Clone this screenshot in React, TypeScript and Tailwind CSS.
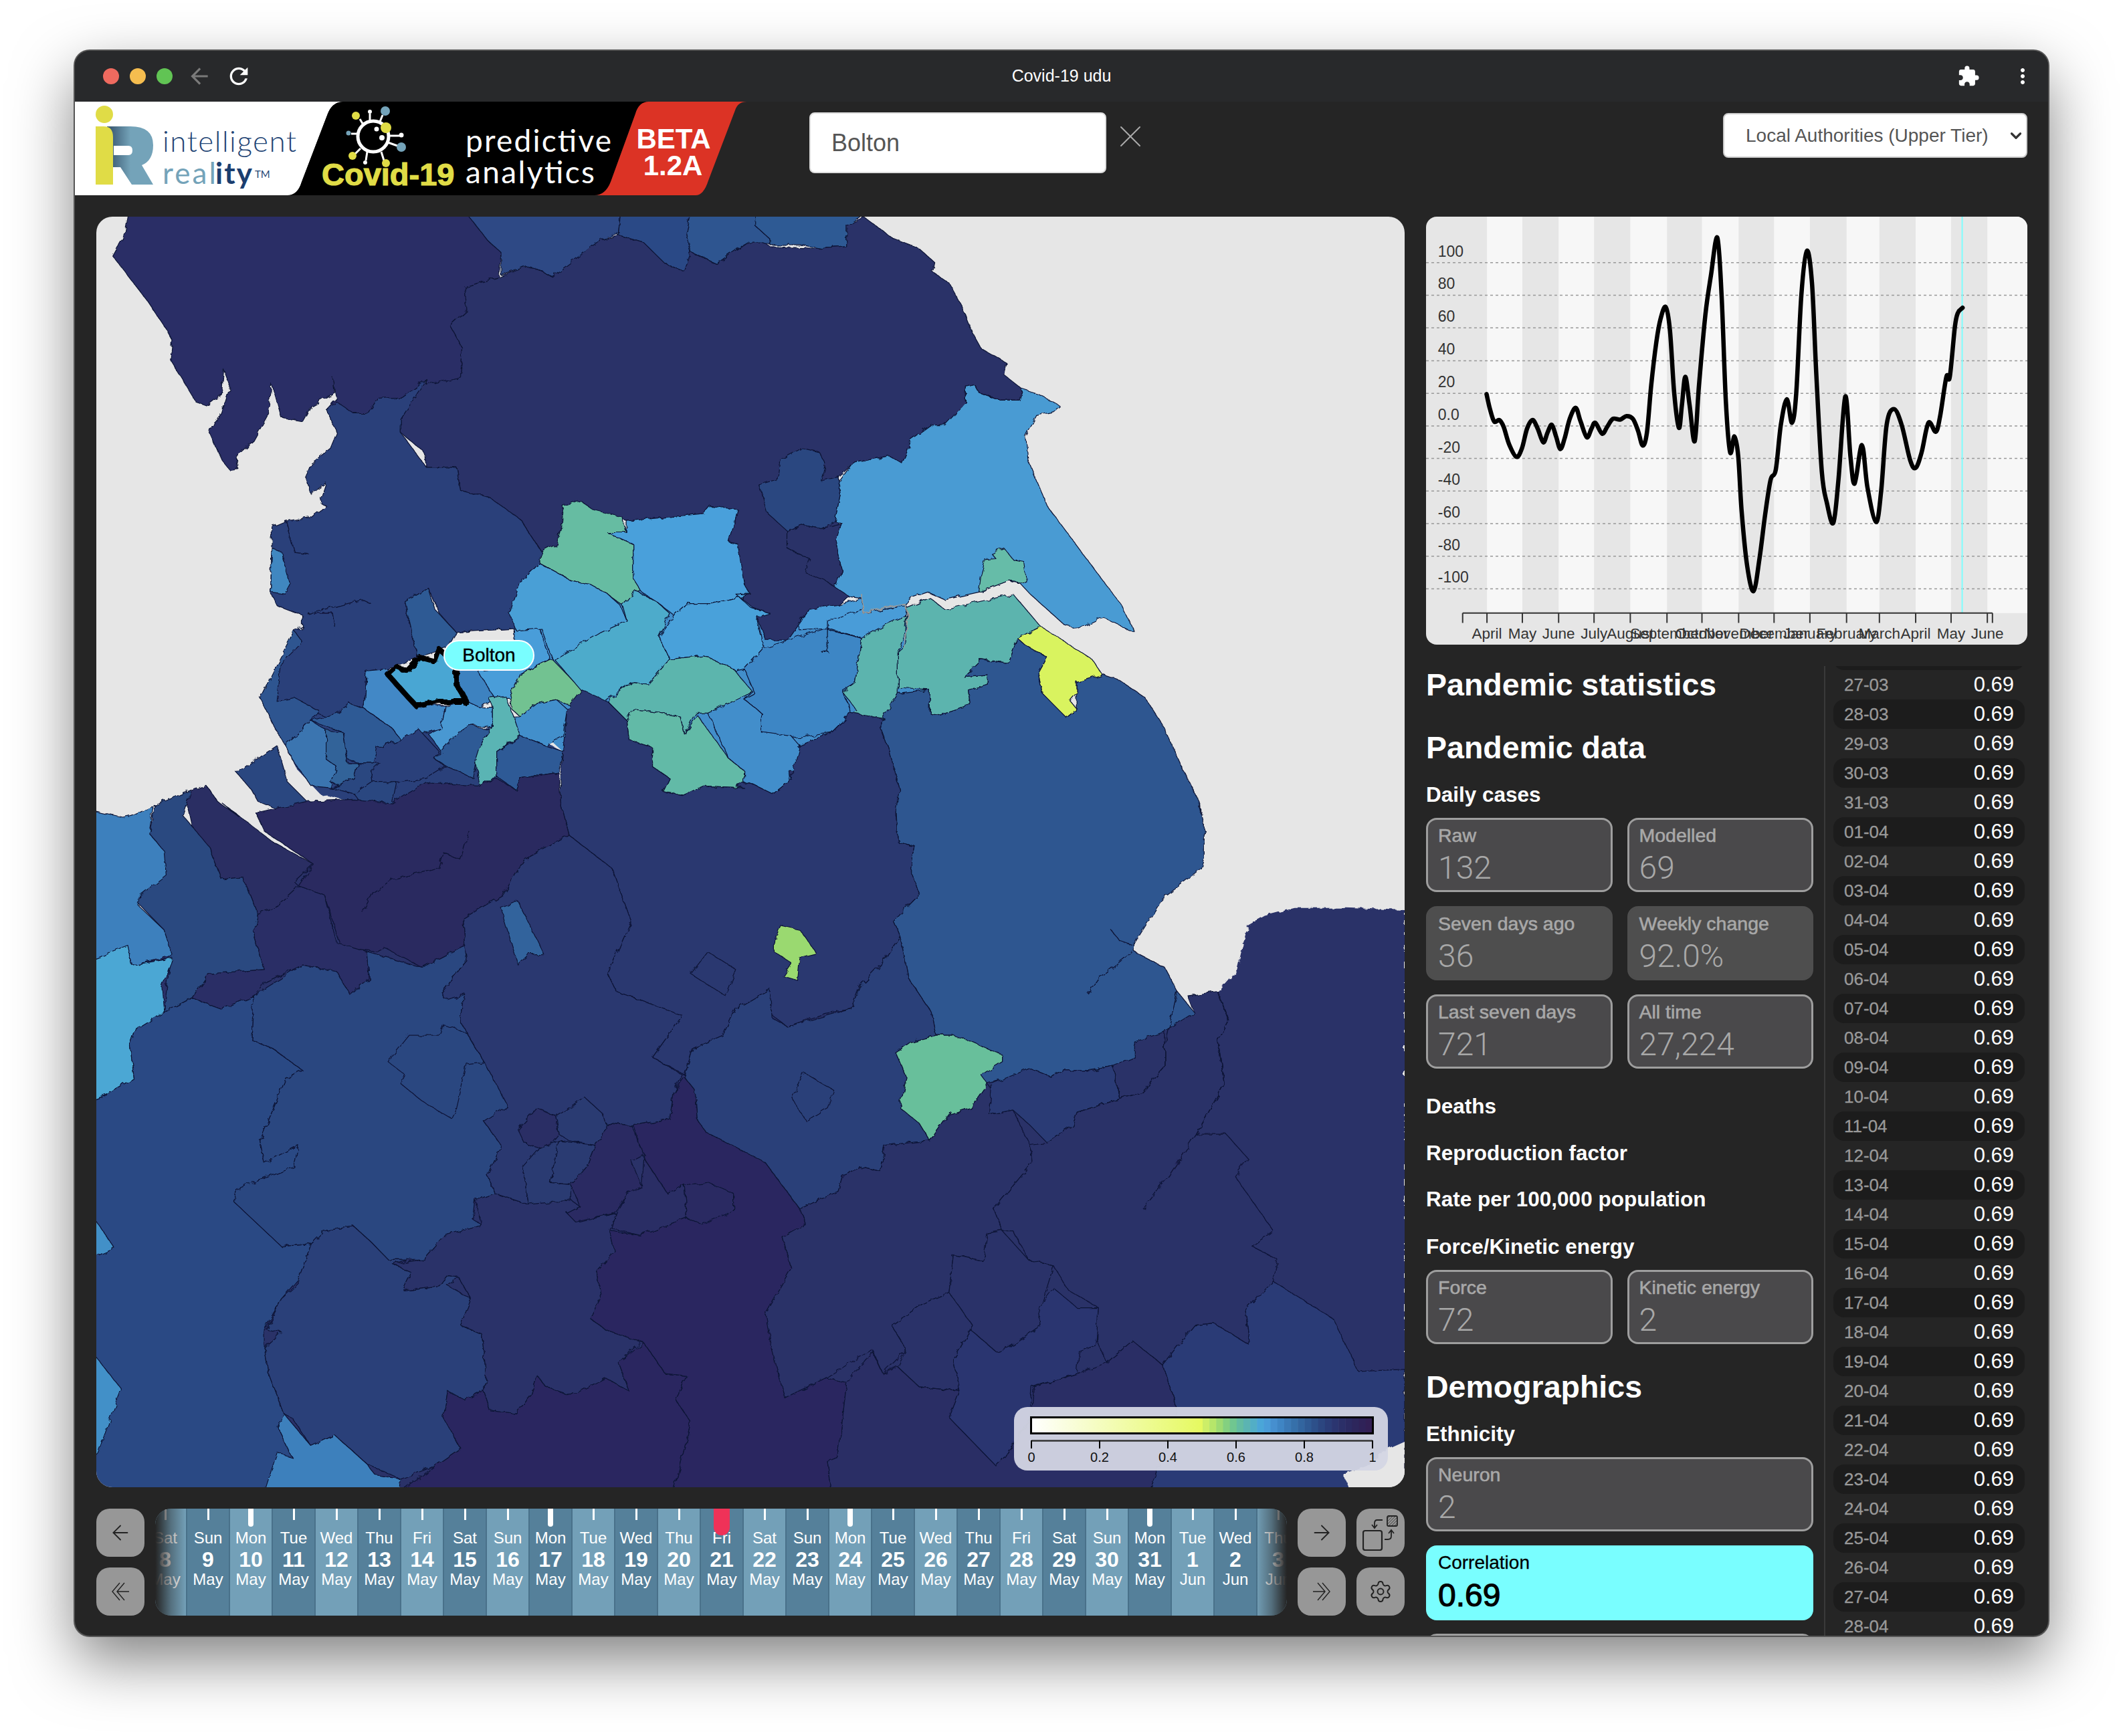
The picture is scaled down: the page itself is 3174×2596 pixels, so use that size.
import { ArrowLeft, ArrowRight, ChevronDown, Settings, X } from "lucide-react";
import { MdArrowBack, MdExtension, MdMoreVert, MdRefresh } from "react-icons/md";

const ARIAL = "font-['Liberation_Sans',Arial,sans-serif]";

// Map traced from the reference, one frame per quarter of the map
const frames: Record<string, number[]> = {
  a: [140, 320, 1.568, 1.742],
  b: [1100, 320, 1.568, 1.742],
  c: [140, 1200, 1.568, 1.522],
  d: [1100, 1200, 1.568, 1.522],
};

const toPath = (s: string) => {
  let f = frames.a;
  const out: string[] = [];
  s.trim().split(/\s+/).forEach((t) => {
    if (frames[t]) {
      f = frames[t];
      return;
    }
    const [x, y] = t.split(",").map(Number);
    out.push(`${(f[0] + x / f[2]).toFixed(1)} ${(f[1] + y / f[3]).toFixed(1)}`);
  });
  return "M" + out.join("L");
};

const regions: [string, string][] = [
  // base land south of the estuaries
  ["#2a3068", "c 0,350 185,350 400,100 520,140 1095,0 b 340,1320 d 375,0 1075,478 1130,430 1175,380 1200,280 1240,258 1310,240 1430,240 1568,245 1568,1570 c 0,1570"],
  // underlay so no sea shows between the Yorkshire districts
  ["#428ecb", "a 1000,1000 1250,820 1530,780 b 70,1040 250,1040 395,1050 660,1100 640,1170 450,1300 340,1320 a 1525,1495 1100,1400 1000,1300"],
  ["#2b3f7a", "a 450,1385 480,1450 530,1510 600,1530 700,1540 800,1500 900,1500 990,1510 1090,1470 1100,1400 1000,1340 800,1340 640,1290 500,1290"],
  // Cumbria and the far north
  ["#2b2f66", "a 80,0 70,60 45,110 80,160 125,225 170,300 185,330 180,380 240,490 265,500 300,470 305,405 320,450 300,520 280,545 272,570 300,640 320,668 340,665 335,630 375,590 410,520 415,440 425,470 440,530 490,540 510,500 565,465 560,425 570,480 545,510 610,520 645,520 665,480 720,478 780,430 780,445 860,425 865,350 835,290 875,250 870,190 950,165 955,100 925,70 875,0"],
  ["#2d4a85", "a 875,0 1235,0 1230,50 1190,65 1190,105 1150,100 1100,160 1075,163 1020,135 955,160 955,100 925,70"],
  ["#2c4a86", "a 1235,0 1400,0 1390,50 1400,100 1385,150 1340,130 1290,75 1230,55"],
  ["#2e5590", "a 1400,0 1568,0 b 45,30 80,65 80,80 0,90 a 1530,75 1460,130 1400,100 1390,50"],
  ["#2f5a94", "b 45,0 300,0 262,30 260,85 200,90 150,80 80,80 80,65 45,30"],
  // North Yorkshire
  ["#2b3268", "a 870,190 950,165 1020,135 1075,163 1150,100 1190,65 1230,55 1290,75 1340,130 1385,150 1400,100 1460,130 1530,75 1568,75 b 80,85 200,90 260,85 260,30 300,8 370,65 430,90 465,125 460,150 500,180 530,240 555,310 575,350 635,388 630,420 672,457 665,485 620,485 570,465 560,445 540,450 540,490 520,520 490,550 460,550 410,590 405,610 390,650 360,630 270,650 240,685 240,900 265,995 240,1020 170,1030 145,1070 120,1110 70,1110 50,1050 80,1040 40,1025 0,990 a 1520,1000 1510,860 1490,855 1510,770 1445,760 1430,780 1250,800 1150,770 1140,745 1100,760 1095,820 1085,860 1050,880 1000,795 960,770 930,740 860,720 850,660 780,660 775,620 720,570 720,535 775,430 780,445 860,425 865,350 835,290 875,250"],
  // Lancashire
  ["#2b3f7a", "a 780,430 720,478 665,480 645,520 610,520 570,490 545,510 570,570 555,610 510,650 497,685 510,730 545,700 530,750 545,760 510,790 450,800 418,815 415,985 430,1020 490,1045 490,1075 470,1085 440,1170 390,1260 430,1290 430,1350 500,1290 570,1320 600,1275 635,1290 640,1190 690,1185 760,1155 730,1010 785,975 810,1040 850,1090 990,1080 1000,960 1045,910 1050,880 1000,795 930,740 860,720 850,660 780,660 720,570 720,535"],
  ["#3f87c0", "a 418,870 440,880 462,965 450,990 415,985"],
  ["#2f5a94", "a 730,1010 785,975 800,1030 850,1090 830,1130 760,1155"],
  ["#2d5490", "a 470,1085 490,1115 440,1170 430,1270 470,1260 530,1295 510,1320 450,1385 430,1350 390,1260"],
  // Greater Manchester and Merseyside
  ["#4288c6", "a 640,1190 690,1185 690,1200 730,1250 755,1280 825,1280 815,1340 720,1370 700,1340 635,1290"],
  ["#3c82c0", "a 850,1130 930,1190 940,1260 905,1285 875,1270 850,1225"],
  ["#4a9dd9", "a 900,1190 990,1180 985,1080 1045,1080 1070,1160 1000,1200 975,1260 940,1260"],
  ["#4898d2", "a 825,1280 875,1270 905,1285 935,1285 935,1340 880,1330 835,1390 815,1400 785,1355 815,1340"],
  ["#2f5a95", "a 800,1420 860,1345 880,1330 930,1345 905,1385 890,1470 830,1440"],
  ["#5ab4b4", "a 925,1260 965,1255 985,1310 1000,1355 945,1400 945,1465 905,1490 895,1420 905,1385 935,1340 935,1285"],
  ["#72c291", "a 1075,1160 1145,1240 1140,1290 1085,1265 1040,1275 1000,1310 980,1290 975,1260 1000,1200"],
  ["#428fcb", "a 1000,1310 1040,1275 1085,1265 1110,1290 1100,1360 1060,1385 1000,1360 985,1310"],
  ["#2f5a96", "a 945,1400 1000,1360 1060,1385 1100,1400 1090,1455 1000,1470 990,1500 945,1465"],
  ["#3a74b0", "a 450,1385 510,1320 545,1345 545,1420 570,1440 555,1495 510,1490 465,1420"],
  ["#2f5a95", "a 510,1320 570,1300 600,1275 635,1290 700,1340 720,1370 665,1390 670,1430 620,1430 595,1420 585,1350"],
  ["#326499", "a 545,1345 585,1350 595,1430 620,1430 610,1470 575,1490 555,1480 570,1440 545,1420"],
  ["#2b3f7a", "a 665,1390 720,1370 760,1340 810,1400 800,1420 825,1440 780,1470 720,1480 655,1490 650,1450"],
  ["#2b4680", "a 335,1455 430,1385 455,1480 500,1530 450,1560 385,1530 370,1500"],
  ["#2b4680", "a 555,1495 575,1490 610,1470 620,1430 670,1430 650,1450 655,1490 610,1510"],
  ["#2b4680", "a 610,1510 650,1480 710,1480 700,1535 630,1540"],
  // West and South Yorkshire
  ["#66bca2", "a 1100,760 1140,745 1170,770 1240,790 1250,830 1205,830 1265,860 1265,950 1305,960 1240,1020 1205,990 1165,965 1120,955 1045,910 1050,880 1085,860 1095,820"],
  ["#4aa0db", "a 1250,800 1430,780 1445,760 1510,770 1490,855 1510,860 1525,965 1540,990 1450,1015 1390,1015 1360,1045 1320,1010 1285,985 1265,950 1265,860 1205,830 1250,830"],
  ["#4a9fd6", "a 1045,910 1120,955 1165,965 1205,990 1235,1020 1250,1060 1190,1090 1110,1150 1075,1160 1050,1080 990,1085 975,1040 1000,960"],
  ["#4dabcb", "a 1240,1020 1270,980 1320,1010 1350,1040 1325,1100 1350,1160 1300,1225 1260,1220 1195,1270 1150,1250 1080,1160 1190,1090 1250,1060"],
  ["#4aa1da", "a 1360,1045 1390,1015 1450,1015 1540,990 b 0,990 35,1025 80,1040 50,1050 65,1130 20,1185 0,1190 a 1500,1185 1430,1150 1350,1160 1325,1100"],
  ["#3e86c5", "b 65,1130 210,1080 295,1105 280,1220 250,1240 270,1300 225,1350 150,1365 60,1350 60,1300 20,1265 45,1250 20,1185"],
  ["#428ecb", "a 1440,1300 1545,1245 b 20,1265 60,1300 60,1350 130,1360 150,1385 140,1450 125,1450 130,1470 85,1510 30,1480 0,1490 a 1525,1450 1490,1420"],
  ["#5bb5ad", "a 1350,1160 1430,1150 1500,1185 1545,1245 1440,1300 1410,1300 1385,1355 1375,1310 1330,1300 1265,1290 1250,1320 1205,1270 1260,1220 1300,1225"],
  ["#62baa7", "a 1265,1290 1330,1300 1375,1310 1385,1355 1415,1305 1490,1420 1525,1450 1525,1495 1430,1490 1380,1515 1335,1505 1350,1470 1310,1440 1310,1390 1255,1370 1250,1320"],
  ["#4a9cd8", "b 145,1070 170,1030 240,1020 295,1000 300,1040 400,1020 395,1050 300,1105 210,1080 150,1085"],
  // East Riding and around the Humber
  ["#4a9bd3", "b 672,457 710,470 760,500 745,515 705,525 680,580 685,640 730,760 810,880 905,1020 935,1090 860,1050 805,1080 770,1070 690,990 665,960 640,955 570,985 490,1005 450,985 410,1000 395,1020 300,1040 295,1000 265,995 230,970 250,930 235,850 248,805 232,800 245,730 238,700 270,650 360,630 390,650 405,610 410,590 460,550 490,550 540,490 540,450 560,445 570,465 620,485 665,485"],
  ["#2a4680", "b 55,705 100,690 105,640 155,610 195,620 210,650 200,695 240,685 245,730 232,800 200,820 155,810 120,825 75,780"],
  ["#2b3268", "b 120,825 155,810 200,820 248,805 235,850 250,930 230,970 210,955 165,935 175,900 120,870"],
  ["#66bca8", "b 570,985 575,940 585,900 610,898 600,885 630,872 650,900 675,905 682,960 640,955"],
  ["#5bb4ae", "b 400,1025 455,1000 490,1030 530,1020 650,990 715,1075 660,1105 640,1170 575,1160 535,1205 590,1200 590,1225 545,1240 550,1280 480,1305 455,1300 455,1240 380,1235 380,1140 400,1120"],
  ["#5bb4ae", "b 295,1105 350,1070 400,1045 395,1100 380,1140 380,1250 350,1315 270,1305 285,1295 250,1245 280,1220"],
  ["#d9f35f", "b 715,1075 800,1135 835,1160 860,1200 820,1215 800,1220 800,1250 785,1270 800,1290 775,1312 740,1275 720,1250 710,1195 730,1155 680,1125 660,1105"],
  // Lincolnshire and the Fens
  ["#2f5690", "b 340,1320 380,1250 455,1240 455,1300 480,1305 550,1280 545,1240 590,1225 590,1200 535,1205 575,1160 640,1170 660,1105 680,1125 730,1155 710,1195 720,1250 775,1312 800,1290 800,1220 860,1200 900,1215 960,1260 1000,1330 1050,1450 1085,1530 1095,1568 d 1085,0 1098,50 1098,125 1090,150 1000,220 935,320 935,340 1005,375 1035,430 1075,478 1010,520 935,545 935,580 885,600 830,610 770,610 740,625 690,605 630,630 585,640 570,620 625,590 625,578 555,565 510,530 470,530 460,480 405,400 395,350 385,305 370,270 430,210 410,150 420,100 380,90 375,0 b 385,1500 360,1400 340,1340"],
  ["#2a3770", "b 225,1350 270,1300 350,1315 340,1320 340,1340 360,1400 385,1500 375,1568 d 375,20 380,90 420,100 410,150 430,210 370,270 385,305 340,370 290,420 270,470 210,480 120,510 80,480 80,425 0,470 c 1500,480 1475,530 1405,560 1385,620 1310,580 1380,485 1225,430 1205,390 1260,270 1215,150 1115,75 1095,0 a 1095,1455 1100,1400 1110,1290 1145,1240 1205,1270 1250,1320 1255,1370 1310,1390 1310,1440 1350,1470 1335,1505 1380,1515 1430,1490 1525,1495 b 0,1490 30,1480 85,1510 130,1470 150,1385"],
  // Cheshire, Shropshire and Wales
  ["#2c2d64", "a 215,1510 265,1490 290,1530 340,1570 c 300,0 380,60 420,90 515,140 470,180 480,190 430,235 385,255 350,170 300,175 270,100 235,70"],
  ["#2b2960", "a 380,1560 500,1530 610,1525 700,1535 780,1480 900,1490 945,1470 990,1500 1000,1470 1090,1455 c 1095,0 1115,75 1010,130 960,210 865,265 870,325 770,375 730,355 680,330 660,340 580,330 540,210 480,190 515,140 400,65"],
  ["#2b2f66", "c 385,255 430,235 480,190 540,210 570,320 640,340 645,400 600,437 570,385 490,370 400,410 375,440 300,470 230,445 270,390 400,380 375,300"],
  ["#2a4880", "a 145,1540 230,1500 210,1568 c 270,100 300,175 350,170 385,255 375,300 400,380 270,390 230,445 165,478 180,350 165,290 105,230 130,70"],
  ["#3e80bd", "a 90,1568 145,1540 c 140,5 130,70 165,110 170,165 110,210 105,235 165,290 185,350 90,370 80,330 0,355 0,20 70,35"],
  ["#4ba7d4", "c 0,355 80,325 90,370 185,355 160,420 165,480 95,520 85,550 95,630 40,660 0,675"],
  ["#2b4a84", "c 0,675 40,660 95,630 85,550 95,520 165,478 230,445 300,470 375,440 370,540 420,560 490,610 450,630 390,770 400,820 480,780 470,830 335,880 330,910 440,1010 510,1005 480,1085 440,1130 400,1200 400,1240 410,1300 445,1390 430,1420 465,1490 420,1570 0,1570"],
  ["#4290c8", "c 0,945 50,1015 0,1035"],
  ["#4290c8", "c 0,1255 65,1335 10,1480 0,1490"],
  ["#2b4680", "c 375,440 490,370 570,385 600,437 645,400 640,340 730,365 770,375 870,325 875,360 815,430 825,450 870,435 860,500 915,590 965,650 970,690 950,730 915,725 955,780 925,850 940,890 895,905 890,950 910,960 825,985 775,1040 735,1040 690,1040 650,1000 610,965 540,975 510,1005 440,1010 330,910 335,880 470,830 480,780 400,820 390,770 450,630 490,610 420,560 370,540"],
  ["#2b4680", "c 690,590 740,530 810,530 820,505 875,525 915,590 875,595 850,700 840,720 770,680 720,640 730,620"],
  ["#2b4179", "c 480,1085 510,1005 540,975 610,965 650,1000 690,1040 735,1040 700,1050 745,1070 725,1110 810,1100 830,1075 855,1080 830,1100 885,1130 860,1190 910,1210 920,1300 915,1340 870,1360 830,1340 820,1400 860,1470 800,1510 720,1540 640,1505 565,1440 510,1465 465,1400 445,1390 410,1300 400,1240 440,1205 405,1200 440,1130 480,1095"],
  ["#3e80bc", "c 445,1390 510,1465 565,1440 640,1505 660,1530 720,1540 718,1570 400,1570 430,1480 465,1490 430,1420"],
  ["#2a3369", "c 700,1050 775,1040 825,985 910,960 895,905 940,890 1020,915 1100,895 1120,905 1140,920 1110,935 1140,955 1225,935 1210,975 1220,1020 1180,1065 1190,1130 1165,1175 1200,1200 1285,1225 1230,1275 1255,1340 1200,1310 1120,1350 1060,1330 1040,1305 1025,1350 990,1390 930,1385 915,1340 920,1300 910,1210 860,1190 885,1130 855,1080 830,1075 810,1100 725,1110 745,1070"],
  ["#2a2860", "c 820,1400 830,1340 870,1360 915,1340 930,1385 990,1390 1025,1350 1040,1305 1060,1330 1120,1350 1200,1310 1255,1340 1230,1275 1290,1230 1340,1300 1390,1305 1365,1360 1400,1410 1360,1570 720,1570 800,1510 860,1470"],
  ["#2a2860", "c 1385,625 1410,655 1415,720 1435,750 1568,815 d 70,820 150,925 165,960 110,990 130,1060 70,1160 130,1235 85,1240 115,1355 210,1310 260,1320 240,1490 215,1500 225,1570 c 1360,1570 1400,1410 1365,1360 1390,1305 1340,1300 1290,1230 1200,1200 1165,1175 1190,1130 1180,1065 1220,1020 1210,975 1280,985 1390,945 1385,870 1345,890 1290,810 1280,780 1265,735 1350,720 1360,660"],
  ["#2a3770", "c 875,360 870,325 865,265 960,210 1010,130 1115,75 1215,150 1260,270 1205,390 1225,430 1380,485 1310,580 1380,620 1360,660 1350,720 1265,735 1205,730 1175,780 1005,830 1020,915 940,890 925,850 955,780 915,725 970,690 915,590 860,500 870,435 825,450 815,430"],
  ["#33649c", "c 955,240 995,225 1055,345 1020,345 995,370 970,290"],
  ["#2a3770", "c 1400,390 1440,340 1505,380 1480,440"],
  ["#2a2b62", "c 1205,730 1260,735 1290,800 1260,815 1285,875 1250,890 1220,935 1130,955 1110,935 1140,920 1120,870 1155,830 1175,780"],
  ["#2a2d65", "c 1290,810 1345,890 1385,870 1390,945 1280,985 1215,970 1225,935 1250,890 1285,875"],
  ["#2a2b62", "c 1385,870 1440,865 1500,890 1500,930 1425,960 1390,945"],
  ["#2a2d65", "c 995,745 1040,695 1085,715 1090,755 1060,790 1010,775"],
  ["#2a3a72", "c 1085,715 1150,670 1195,710 1205,745 1175,780 1115,770 1090,755"],
  ["#2a3a72", "c 1090,770 1175,780 1155,830 1120,870 1070,865"],
  ["#2a3a72", "c 1040,790 1090,770 1070,865 1120,870 1120,905 1020,915 1005,830"],
  // East Midlands and East Anglia
  ["#9ad96f", "d 105,280 150,290 190,345 150,355 145,405 110,395 130,365 90,340 90,315"],
  ["#2b4079", "d 0,470 80,425 85,490 120,510 270,470 290,420 340,370 385,305 395,350 405,400 460,480 470,530 410,545 375,570 400,625 385,695 430,730 455,770 350,780 340,840 300,830 250,850 240,885 150,925 70,820 0,785 c 1435,750 1415,720 1410,655 1385,625 1405,560 1475,530 1500,480"],
  ["#2b4079", "d 130,670 160,615 230,655 215,695 165,725"],
  ["#68bf9b", "d 375,570 410,545 470,530 510,530 555,545 625,575 625,590 575,620 590,640 550,695 500,710 455,770 430,730 385,695 400,625"],
  ["#2a3068", "d 150,925 240,885 250,850 300,830 340,840 350,780 455,770 500,710 550,695 590,640 605,660 595,710 650,700 690,780 695,820 605,925 625,975 590,980 580,1045 510,1030 500,1115 440,1140 365,1190 400,1245 345,1300 320,1245 210,1310 115,1355 85,1245 70,1160 130,1060 110,990 165,960"],
  ["#2a3b74", "d 595,710 600,640 690,605 740,625 770,610 830,610 885,600 900,675 800,705 790,735 730,775 690,735 650,700"],
  ["#2a3068", "d 625,975 605,925 695,820 690,780 730,775 790,735 800,705 900,675 950,660 1005,600 1005,520 1075,478 1060,440 1130,430 1155,495 1130,540 1145,640 1080,755 1150,755 1200,810 1170,850 1260,975 1210,1010 1270,1040 1260,1090 1195,1155 1205,1235 1120,1185 1075,1190 1000,1280 930,1225 870,1275 845,1220 850,1150 780,1110 745,1055 685,1040 650,975"],
  ["#2b3a76", "d 1205,1235 1195,1155 1260,1090 1400,1175 1460,1295 1568,1290 1568,1570 970,1570 1035,1380 1000,1280 1075,1190 1120,1185"],
  ["#2a3369", "d 510,1030 580,1045 590,980 625,975 685,1040 745,1055 715,1150 715,1190 640,1240 610,1250 550,1200 500,1115"],
  ["#2a3369", "d 365,1190 440,1140 500,1115 555,1190 510,1270 525,1340 430,1330 380,1285 400,1245"],
  ["#2a3470", "d 550,1200 610,1250 640,1240 715,1190 710,1150 745,1105 800,1150 850,1150 845,1235 805,1250 800,1300 695,1330 690,1400 630,1490 610,1510 500,1400 525,1340 510,1270"],
  ["#2a2d65", "d 260,1320 320,1250 345,1300 380,1285 430,1330 525,1340 500,1400 610,1510 630,1490 695,1400 700,1330 800,1300 870,1275 930,1225 1000,1280 1035,1380 970,1570 225,1570 215,1500 240,1490"],
  ["#e6e6e6", "d 1425,1530 1480,1510 1510,1480 1568,1455 1568,1570 1440,1570"],
];

// Rivers and lone boundary lines
const lines = [
  "a 450,800 470,880 505,885",
  "a 500,1040 560,1025 630,1005 650,1015",
  "a 515,1040 560,1040 565,1075",
  "b 215,1060 215,1140 200,1140",
  "b 215,1060 295,1030",
  "b 215,1078 295,1105",
  "d 880,290 900,315 930,325",
  "d 825,435 850,400 930,340",
  "d 1035,430 1005,560 1005,600 950,660 800,705",
  "d 1130,430 1155,495 1130,540 1145,640 1080,755 1015,850 955,925",
  "d 885,600 900,675",
  "c 630,250 655,205 700,175 810,150 820,115 860,130 880,65",
];

const boltonShape = "a 690,1200 710,1180 735,1190 765,1155 800,1165 810,1135 850,1170 850,1225 875,1270 810,1270 755,1280 730,1250";

const MapView = () => (
  <svg viewBox="144 324 1956 1900" className="block h-full w-full">
    <defs>
      <filter id="rough" x="0" y="0" width="100%" height="100%">
        <feTurbulence type="fractalNoise" baseFrequency="0.08" numOctaves="3" seed="4" />
        <feDisplacementMap in="SourceGraphic" scale="8" />
      </filter>
    </defs>
    <g filter="url(#rough)">
      {regions.map(([fill, pts], i) => (
        <path key={i} d={toPath(pts) + "Z"} fill={fill} stroke={fill === "#e6e6e6" ? "none" : "#0d1436"} strokeWidth={i < 3 ? 0 : 1.2} strokeLinejoin="round" />
      ))}
      {lines.map((l) => (
        <path key={l} d={toPath(l)} fill="none" stroke="#0d1436" strokeWidth="1.3" />
      ))}
      <path d={toPath("b 295,990 300,1040 350,1025 395,1015 405,1050 395,1130")} fill="none" stroke="#9a9a9a" strokeWidth="2" />
      <path d={toPath(boltonShape) + "Z"} fill="#4aa6d3" stroke="#000" strokeWidth="8" strokeLinejoin="round" />
    </g>
  </svg>
);

// Colour scale, smooth up to 0.5 and stepped after it
const steps = ["#cdee68", "#b6e66a", "#9ddb72", "#84d080", "#70c690", "#63bca2", "#5bb4b2", "#52aec6", "#4aa6d8", "#4a9cd8", "#468fcf", "#3f85c4", "#3b79b6", "#3670aa", "#32659f", "#2f5a94", "#2d508a", "#2c4680", "#2b3d78", "#2b3570", "#2b2f68", "#2b2a62", "#2d265c", "#2f2258", "#321f54"];

const Legend = () => (
  <svg width="559" height="95" viewBox="0 0 559 95" className="block">
    <defs>
      <linearGradient id="scale">
        <stop offset="0" stopColor="#ffffff" />
        <stop offset="1" stopColor="#e5f95f" />
      </linearGradient>
    </defs>
    <rect x="26" y="16" width="256" height="22" fill="url(#scale)" />
    {steps.map((c, i) => (
      <rect key={c} x={282 + (i * 254) / 25} y="16" width={254 / 25 + 0.5} height="22" fill={c} />
    ))}
    <rect x="25.5" y="15.5" width="511" height="24" fill="none" stroke="#000" strokeWidth="3" />
    <line x1="26" y1="50.5" x2="536" y2="50.5" stroke="#333" strokeWidth="2.5" />
    {[0, 0.2, 0.4, 0.6, 0.8, 1].map((v, i) => (
      <g key={v}>
        <line x1={26 + i * 102} y1="50" x2={26 + i * 102} y2="62" stroke="#000" strokeWidth="2" />
        <text x={26 + i * 102} y="82" textAnchor="middle" fontSize="20" fill="#111" fontFamily="Liberation Sans, sans-serif">{v}</text>
      </g>
    ))}
  </svg>
);

// Correlation chart, points read off the reference
const chartX = (x: number) => x / 1.568 - 32;
const chartY = (y: number) => y / 1.704 - 264;

const curve: [number, number][] = [[192, 902], [200, 940], [210, 972], [222, 968], [232, 985], [245, 1030], [262, 1062], [275, 1040], [287, 990], [300, 968], [312, 990], [325, 1025], [335, 1000], [345, 980], [355, 1010], [365, 1042], [375, 1015], [387, 965], [401, 937], [412, 970], [427, 1012], [438, 990], [447, 975], [463, 1003], [475, 985], [488, 965], [505, 967], [520, 958], [535, 965], [547, 995], [558, 1033], [568, 1000], [578, 880], [590, 770], [600, 710], [612, 680], [622, 740], [632, 900], [643, 988], [650, 930], [658, 858], [668, 930], [680, 1022], [690, 880], [705, 700], [718, 600], [733, 503], [743, 650], [753, 920], [763, 1050], [773, 1010], [782, 1060], [790, 1200], [803, 1340], [818, 1404], [832, 1320], [845, 1210], [858, 1120], [870, 1095], [882, 980], [896, 915], [908, 975], [918, 900], [930, 650], [943, 537], [955, 620], [965, 850], [978, 1100], [990, 1180], [1005, 1230], [1017, 1120], [1033, 908], [1045, 1060], [1055, 1130], [1072, 1032], [1085, 1140], [1105, 1228], [1117, 1150], [1130, 980], [1147, 940], [1165, 980], [1185, 1070], [1198, 1090], [1212, 1050], [1228, 975], [1245, 998], [1255, 960], [1270, 858], [1278, 858], [1290, 730], [1297, 695], [1308, 682]];

const smooth = (pts: [number, number][]) => {
  const p = pts.map(([x, y]) => [chartX(x), chartY(y)]);
  let d = `M${p[0][0]} ${p[0][1]}`;
  for (let i = 0; i < p.length - 1; i++) {
    const a = p[Math.max(i - 1, 0)];
    const b = p[i];
    const c = p[i + 1];
    const e = p[Math.min(i + 2, p.length - 1)];
    d += `C${b[0] + (c[0] - a[0]) / 6} ${b[1] + (c[1] - a[1]) / 6} ${c[0] - (e[0] - b[0]) / 6} ${c[1] - (e[1] - b[1]) / 6} ${c[0]} ${c[1]}`;
  }
  return d;
};

const monthTicks: [number, string][] = [[193, "April"], [276, "May"], [361, "June"], [444, "July"], [529, "August"], [615, "September"], [697, "October"], [783, "November"], [866, "December"], [950, "January"], [1036, "February"], [1113, "March"], [1198, "April"], [1281, "May"], [1366, "June"]];
const gridRows: [number, string][] = [[567, "100"], [650, "80"], [733, "60"], [817, "40"], [900, "20"], [983, "0.0"], [1066, "-20"], [1149, "-40"], [1232, "-60"], [1315, "-80"], [1398, "-100"]];

const Chart = () => (
  <svg viewBox="0 0 899 640" className="block h-[640px] w-[899px] rounded-[16px]" fontFamily="Liberation Sans, sans-serif">
    <rect width="899" height="640" fill="#e6e6e6" />
    <rect y="0" x={chartX(193)} width={899 - chartX(193)} height={chartY(1460)} fill="#f7f7f7" />
    {monthTicks.slice(0, -1).map(([x], i) =>
      i % 2 === 0 ? null : <rect key={x} x={chartX(x)} y="0" width={chartX(monthTicks[i + 1][0]) - chartX(x)} height={chartY(1460)} fill="#e6e6e6" />,
    )}
    {gridRows.map(([y, label]) => (
      <g key={label}>
        <line x1="0" x2="899" y1={chartY(y)} y2={chartY(y)} stroke="#999" strokeWidth="1.5" strokeDasharray="4 4" />
        <text x={chartX(78)} y={chartY(y) - 9} fontSize="23" fill="#333">{label}</text>
      </g>
    ))}
    <line x1={chartX(1307)} x2={chartX(1307)} y1="0" y2={chartY(1460)} stroke="#7ffefe" strokeWidth="2" />
    <path d={smooth(curve)} fill="none" stroke="#000" strokeWidth="6.5" strokeLinecap="round" strokeLinejoin="round" />
    <line x1={chartX(136)} x2={chartX(1378)} y1={chartY(1460)} y2={chartY(1460)} stroke="#333" strokeWidth="2" />
    {[136, 1378, ...monthTicks.map((m) => m[0])].map((x) => (
      <line key={x} x1={chartX(x)} x2={chartX(x)} y1={chartY(1460)} y2={chartY(1485)} stroke="#333" strokeWidth="2" />
    ))}
    {monthTicks.map(([x, label], i) => (
      <text key={i} x={chartX(x)} y="631" textAnchor="middle" fontSize="22.5" fill="#333">{label}</text>
    ))}
  </svg>
);

const Logo = () => (
  <svg viewBox="112 152 1005 140" className="block h-[140px] w-[1005px]">
    <defs>
      <linearGradient id="rshade" gradientUnits="userSpaceOnUse" x1="165" x2="195" y1="0" y2="0">
        <stop offset="0" stopColor="#3d5c75" />
        <stop offset="1" stopColor="#74a3b9" />
      </linearGradient>
    </defs>
    <path d="M112 152H514Q497 152 490 170L451 272Q445 292 430 292H112Z" fill="#fff" />
    <path d="M514 152H975Q955 152 950 170L913 272Q905 292 889 292H430Q445 292 451 272L490 170Q497 152 514 152Z" fill="#000" />
    <path d="M963 152H1117Q1103 152 1099 165L1059 270Q1052 292 1040 292H889Q905 292 913 272L950 170Q955 152 970 152Z" fill="#dc3325" />

    <path d="M155 189H195Q229 189 229 217Q229 240 212 247L229 276H197L180 250H160V189ZM170 218V232H192Q198 232 198 225Q198 218 192 218Z" fill="url(#rshade)" fillRule="evenodd" />
    <circle cx="156" cy="171" r="13" fill="#e0dc46" />
    <path d="M143 189H155Q169 189 169 205V276H143Z" fill="#e0dc46" />
    <g fontFamily="Lato, sans-serif" fontWeight="300" fontSize="44">
      <text x="243" y="227" fill="#1f4575" textLength="200">intelligent</text>
      <text x="243" y="275" fill="#74a3b9" fontWeight="400" textLength="80">real</text>
      <text x="322" y="275" fill="#1b3e6f" fontWeight="700" textLength="55">ity</text>
      <text x="381" y="266" fill="#1f4575" fontSize="15" fontWeight="400">TM</text>
      <text x="696" y="227" fill="#fff" fontSize="46" fontWeight="400" textLength="218">predictive</text>
      <text x="696" y="274" fill="#fff" fontSize="46" fontWeight="400" textLength="193">analytics</text>
    </g>

    <g stroke="#fff" strokeWidth="3">
      <path d="M553 170V180M538 178L544 188M525 200H534M572 172L568 182M597 203H583M594 218L580 213M531 230L539 222M547 240L549 227M574 240L570 227" fill="none" />
    </g>
    <circle cx="558" cy="204" r="23" fill="#000" stroke="#fff" strokeWidth="5" />
    <circle cx="577" cy="191" r="8" fill="#e0dc46" />
    <circle cx="563" cy="193" r="3.5" fill="#fff" />
    <circle cx="571" cy="206" r="4" fill="#fff" />
    <ellipse cx="576" cy="166" rx="7" ry="7" fill="#74a3b9" />
    <circle cx="553" cy="167" r="3" fill="#fff" />
    <circle cx="532" cy="173" r="6" fill="#e0dc46" />
    <circle cx="521" cy="199" r="3.5" fill="#74a3b9" />
    <circle cx="600" cy="202" r="3.5" fill="#fff" />
    <circle cx="600" cy="220" r="7" fill="#74a3b9" />
    <circle cx="527" cy="233" r="6" fill="#e0dc46" />
    <circle cx="546" cy="243" r="3" fill="#fff" />
    <circle cx="577" cy="244" r="6" fill="#e0dc46" />

    <g fontFamily="Liberation Sans, sans-serif" fontWeight="700">
      <text x="481" y="277" fill="#e0dc46" stroke="#e0dc46" strokeWidth="1.2" fontSize="47">Covid-19</text>
      <text x="1007" y="222" textAnchor="middle" fill="#fff" fontSize="42">BETA</text>
      <text x="1006" y="262" textAnchor="middle" fill="#fff" fontSize="42">1.2A</text>
    </g>
  </svg>
);

const StatCard = ({ label, value, outlined = true }: { label: string; value: string; outlined?: boolean }) => (
  <div className={`h-[111px] rounded-[16px] border-[3px] px-[15px] pt-[7px] ${outlined ? "border-[#9e9e9e] bg-[#4a494b]" : "border-[#4e4e4e] bg-[#4e4e4e]"}`}>
    <div className="text-[28.5px] leading-[32px] text-[#a8a8a8] [-webkit-text-stroke:0.6px_#a8a8a8]">{label}</div>
    <div className="mt-[5px] font-['Roboto',sans-serif] text-[48px] leading-[56px] font-light text-[#a8a8a8]">{value}</div>
  </div>
);

const Heading = ({ children, className = "" }: { children: string; className?: string }) => (
  <h2 className={`text-[46.5px] leading-[56px] font-bold text-white ${className}`}>{children}</h2>
);

const SubHeading = ({ children, className = "" }: { children: string; className?: string }) => (
  <h3 className={`text-[31.5px] leading-[36px] font-bold text-white ${className}`}>{children}</h3>
);

const dates = [
  ...[26, 27, 28, 29, 30, 31].map((d) => `${d}-03`),
  ...Array.from({ length: 28 }, (_, i) => `${String(i + 1).padStart(2, "0")}-04`),
];

const days = [
  ["Sat", "8", "May"], ["Sun", "9", "May"], ["Mon", "10", "May"], ["Tue", "11", "May"], ["Wed", "12", "May"], ["Thu", "13", "May"], ["Fri", "14", "May"],
  ["Sat", "15", "May"], ["Sun", "16", "May"], ["Mon", "17", "May"], ["Tue", "18", "May"], ["Wed", "19", "May"], ["Thu", "20", "May"], ["Fri", "21", "May"],
  ["Sat", "22", "May"], ["Sun", "23", "May"], ["Mon", "24", "May"], ["Tue", "25", "May"], ["Wed", "26", "May"], ["Thu", "27", "May"], ["Fri", "28", "May"],
  ["Sat", "29", "May"], ["Sun", "30", "May"], ["Mon", "31", "May"], ["Tue", "1", "Jun"], ["Wed", "2", "Jun"], ["Thu", "3", "Jun"],
];

const DayCell = ({ day, index }: { day: string[]; index: number }) => {
  const selected = day[1] === "21";
  const monday = day[0] === "Mon";
  return (
    <div className={`relative flex h-[160px] w-[64px] shrink-0 flex-col items-center border-l-2 border-[#49718a] text-white ${index % 2 === 0 ? "bg-[#73a0b8]" : "bg-[#55809a]"}`}>
      <div className={selected ? "absolute top-0 h-[40px] w-[24px] rounded-b-full bg-[#ef3258]" : monday ? "absolute top-0 h-[27px] w-[8px] rounded-b-full bg-white" : "absolute top-0 h-[17px] w-[3px] bg-white"} />
      <div className="mt-[30px] text-[24px] leading-[28px]">{day[0]}</div>
      <div className="mt-[1px] text-[32px] leading-[34px] font-bold">{day[1]}</div>
      <div className="-mt-[1px] text-[24px] leading-[28px]">{day[2]}</div>
    </div>
  );
};

const NavButton = ({ children }: { children: React.ReactNode }) => (
  <div className="flex h-[72px] w-[72px] items-center justify-center rounded-[20px] bg-[#979797] text-[#222]">{children}</div>
);

const DoubleArrow = ({ flip = false }: { flip?: boolean }) => (
  <svg width="36" height="36" viewBox="0 0 36 36" fill="none" stroke="#222" strokeWidth="1.4" className={flip ? "-scale-x-100" : ""}>
    <path d="M17 5L6 18L17 31M24 5L13 18L24 31M13 18H31" />
  </svg>
);

const SwapIcon = () => (
  <svg width="54" height="54" viewBox="0 0 54 54" fill="none" stroke="#222" strokeWidth="1.8">
    <defs>
      <pattern id="hatch" width="3" height="3" patternUnits="userSpaceOnUse" patternTransform="rotate(45)">
        <rect width="3" height="3" fill="#979797" stroke="none" />
        <line x1="0" y1="0" x2="0" y2="3" stroke="#222" strokeWidth="1.2" />
      </pattern>
    </defs>
    <rect x="1" y="24" width="28" height="29" rx="3" strokeWidth="2.2" />
    <rect x="37" y="2" width="15" height="15" rx="2" fill="url(#hatch)" />
    <path d="M30 8H22Q18 8 18 13V19M14 15L18 20L22 15" />
    <path d="M33 37H38Q43 37 43 32V24M39 28L43 23L47 28" />
  </svg>
);

const App = () => (
  <div className={`h-[2596px] w-[3174px] overflow-hidden bg-white pt-[76px] pl-[112px] ${ARIAL}`}>
    <div className="h-[2370px] w-[2950px] overflow-hidden rounded-[22px] bg-[#252525] shadow-[0_36px_90px_rgba(0,0,0,0.5)] ring-2 ring-[#555]">
      <div className="relative flex h-[76px] items-center bg-[#28292b] pl-[42px]">
        <div className="flex gap-[16px]">
          <span className="h-[24px] w-[24px] rounded-full bg-[#ee6a5f]" />
          <span className="h-[24px] w-[24px] rounded-full bg-[#f5bd4f]" />
          <span className="h-[24px] w-[24px] rounded-full bg-[#61c454]" />
        </div>
        <MdArrowBack className="ml-[21px] text-[#7a7a7a]" size={38} />
        <MdRefresh className="ml-[20px] text-white" size={40} />
        <div className="absolute inset-x-0 text-center text-[25px] text-white">Covid-19 udu</div>
        <MdExtension className="ml-auto text-white" size={34} />
        <MdMoreVert className="mr-[20px] ml-[46px] text-white" size={36} />
      </div>

      <div className="flex h-[172px] items-start">
        <Logo />
        <div className="mt-[16px] ml-[93px] flex h-[91px] w-[444px] items-center rounded-[8px] border-2 border-[#ddd] bg-white pl-[31px] text-[36px] text-[#555]">Bolton</div>
        <X className="mt-[24px] ml-[8px] text-[#aaa]" size={56} strokeWidth={0.85} />
        <div className="mt-[17px] ml-auto mr-[31px] flex h-[67px] w-[455px] items-center rounded-[8px] border-2 border-[#ccc] bg-white pl-[32px] text-[28px] text-[#555]">
          Local Authorities (Upper Tier)
          <ChevronDown className="ml-[28px] text-[#333]" size={26} strokeWidth={3} />
        </div>
      </div>

      <div className="flex gap-[32px] pl-[32px]">
        <div className="w-[1956px]">
          <div className="relative h-[1900px] overflow-hidden rounded-[24px] bg-[#e6e6e6]">
            <MapView />
            <div className="absolute top-[633px] left-[519px] flex h-[46px] w-[136px] items-center justify-center rounded-full border-2 border-white bg-[#79feff] text-[28px] text-black [-webkit-text-stroke:0.4px_#000]">Bolton</div>
            <div className="absolute top-[1780px] left-[1372px] rounded-[20px] bg-[#d4d6e4]/95">
              <Legend />
            </div>
          </div>

          <div className="mt-[32px] flex h-[160px]">
            <div className="flex flex-col gap-[16px]">
              <NavButton><ArrowLeft size={36} strokeWidth={1.2} /></NavButton>
              <NavButton><DoubleArrow /></NavButton>
            </div>
            <div className="relative mx-[16px] w-[1692px] overflow-hidden rounded-[24px]">
              <div className="-ml-[18px] flex">
                {days.map((d, i) => <DayCell key={d[1] + d[2]} day={d} index={i} />)}
              </div>
              <div className="absolute inset-y-0 left-0 w-[46px] bg-gradient-to-r from-[#252525] via-[#252525]/40 to-transparent" />
              <div className="absolute inset-y-0 right-0 w-[46px] bg-gradient-to-l from-[#252525] via-[#252525]/40 to-transparent" />
            </div>
            <div className="flex flex-col gap-[16px]">
              <NavButton><ArrowRight size={36} strokeWidth={1.2} /></NavButton>
              <NavButton><DoubleArrow flip /></NavButton>
            </div>
            <div className="ml-[16px] flex flex-col gap-[16px]">
              <NavButton><SwapIcon /></NavButton>
              <NavButton><Settings size={36} strokeWidth={1.3} /></NavButton>
            </div>
          </div>
        </div>

        <div className="w-[899px]">
          <Chart />
          <div className="mt-[32px] flex h-[1450px] overflow-hidden">
            <div className="w-[579px] shrink-0">
              <Heading>Pandemic statistics</Heading>
              <Heading className="mt-[38px]">Pandemic data</Heading>
              <SubHeading className="mt-[24px]">Daily cases</SubHeading>
              <div className="mt-[17px] grid grid-cols-2 gap-x-[22px] gap-y-[21px]">
                <StatCard label="Raw" value="132" />
                <StatCard label="Modelled" value="69" />
                <StatCard label="Seven days ago" value="36" outlined={false} />
                <StatCard label="Weekly change" value="92.0%" outlined={false} />
                <StatCard label="Last seven days" value="721" />
                <StatCard label="All time" value="27,224" />
              </div>
              <SubHeading className="mt-[38px]">Deaths</SubHeading>
              <SubHeading className="mt-[34px]">Reproduction factor</SubHeading>
              <SubHeading className="mt-[33px]">Rate per 100,000 population</SubHeading>
              <SubHeading className="mt-[35px]">Force/Kinetic energy</SubHeading>
              <div className="mt-[17px] grid grid-cols-2 gap-x-[22px]">
                <StatCard label="Force" value="72" />
                <StatCard label="Kinetic energy" value="2" />
              </div>
              <Heading className="mt-[36px]">Demographics</Heading>
              <SubHeading className="mt-[24px]">Ethnicity</SubHeading>
              <div className="mt-[17px]">
                <StatCard label="Neuron" value="2" />
              </div>
              <div className="mt-[21px] h-[112px] rounded-[16px] bg-[#79feff] px-[18px] pt-[10px] text-black">
                <div className="text-[28px] leading-[32px] [-webkit-text-stroke:0.3px_#000]">Correlation</div>
                <div className="mt-[5px] text-[48px] leading-[56px] [-webkit-text-stroke:1.2px_#000]">0.69</div>
              </div>
              <div className="mt-[20px]">
                <StatCard label="" value="" />
              </div>
            </div>
            <div className="ml-[16px] w-[304px] border-l-2 border-[#3a3a3a] pl-[12px]">
              <div className="-mt-[38px] w-[286px]">
                {dates.map((d, i) => (
                  <div key={d} className={`flex h-[44px] items-center justify-between rounded-[16px] px-[16px] ${i % 2 === 0 ? "bg-[#1c1c1c]" : ""}`}>
                    <span className="text-[26px] text-[#999] [-webkit-text-stroke:0.3px_#999]">{d}</span>
                    <span className="text-[31px] text-white">0.69</span>
                  </div>
                ))}
              </div>
            </div>
          </div>
        </div>
      </div>
    </div>
  </div>
);

export default App;
